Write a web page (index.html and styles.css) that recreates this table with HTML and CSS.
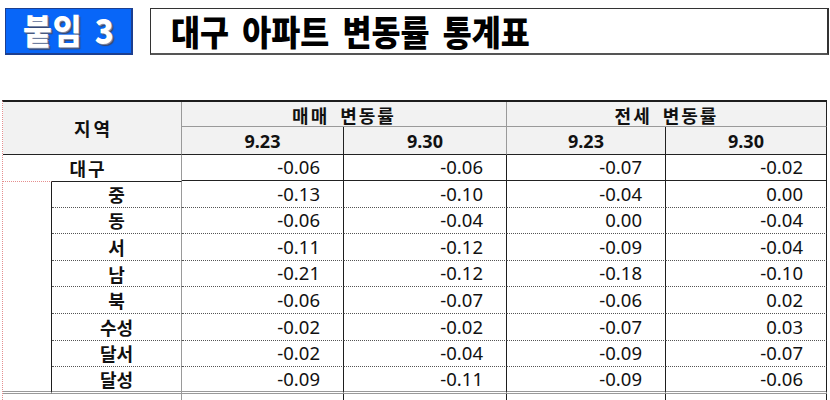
FILE: index.html
```html
<!DOCTYPE html>
<html lang="ko">
<head>
<meta charset="utf-8">
<link rel="stylesheet" href="styles.css">
</head>
<body>
<div class="top">
  <div class="badge"><span class="badge-text">붙임 3</span></div>
  <div class="title-box"><span class="title-text">대구 아파트 변동률 통계표</span></div>
</div>
<table class="stats">
  <colgroup>
    <col class="c-side"><col class="c-name"><col class="c-a"><col class="c-b"><col class="c-c"><col class="c-d">
  </colgroup>
  <thead>
    <tr class="h1">
      <th class="region" colspan="2" rowspan="2">지역</th>
      <th class="grp grp-a" colspan="2">매매 변동률</th>
      <th class="grp grp-b" colspan="2">전세 변동률</th>
    </tr>
    <tr class="h2">
      <th class="sub dark-r">9.23</th>
      <th class="sub gray-r">9.30</th>
      <th class="sub dark-r">9.23</th>
      <th class="sub dark-r">9.30</th>
    </tr>
  </thead>
  <tbody>
    <tr class="r-total">
      <td class="total-name" colspan="2">대구</td>
      <td class="num">-0.06</td><td class="num">-0.06</td><td class="num">-0.07</td><td class="num">-0.02</td>
    </tr>
    <tr class="r-dist first">
      <td class="side" rowspan="8"></td>
      <td class="dname">중</td>
      <td class="num">-0.13</td><td class="num">-0.10</td><td class="num">-0.04</td><td class="num">0.00</td>
    </tr>
    <tr class="r-dist">
      <td class="dname">동</td>
      <td class="num">-0.06</td><td class="num">-0.04</td><td class="num">0.00</td><td class="num">-0.04</td>
    </tr>
    <tr class="r-dist">
      <td class="dname">서</td>
      <td class="num">-0.11</td><td class="num">-0.12</td><td class="num">-0.09</td><td class="num">-0.04</td>
    </tr>
    <tr class="r-dist">
      <td class="dname">남</td>
      <td class="num">-0.21</td><td class="num">-0.12</td><td class="num">-0.18</td><td class="num">-0.10</td>
    </tr>
    <tr class="r-dist">
      <td class="dname">북</td>
      <td class="num">-0.06</td><td class="num">-0.07</td><td class="num">-0.06</td><td class="num">0.02</td>
    </tr>
    <tr class="r-dist">
      <td class="dname">수성</td>
      <td class="num">-0.02</td><td class="num">-0.02</td><td class="num">-0.07</td><td class="num">0.03</td>
    </tr>
    <tr class="r-dist">
      <td class="dname">달서</td>
      <td class="num">-0.02</td><td class="num">-0.04</td><td class="num">-0.09</td><td class="num">-0.07</td>
    </tr>
    <tr class="r-dist last">
      <td class="dname">달성</td>
      <td class="num">-0.09</td><td class="num">-0.11</td><td class="num">-0.09</td><td class="num">-0.06</td>
    </tr>
    <tr class="r-tail">
      <td class="tail-name" colspan="2"></td>
      <td class="tail"></td><td class="tail"></td><td class="tail"></td><td class="tail"></td>
    </tr>
  </tbody>
</table>
</body>
</html>
```

FILE: styles.css
```css
html, body {
  margin: 0;
  padding: 0;
  background: #ffffff;
  overflow: hidden;
}
body {
  width: 830px;
  height: 400px;
  font-family: "Noto Sans CJK KR", sans-serif;
  color: #111;
}
.top {
  display: flex;
  align-items: stretch;
  padding: 8px 1px 0 5px;
  height: 47px;
}
.badge {
  width: 128px;
  box-sizing: border-box;
  background: #0866f8;
  border: 1px solid #1d3f8f;
  border-right-width: 2px;
  border-bottom-width: 2px;
  display: flex;
  align-items: center;
  justify-content: center;
}
.badge-text {
  display: inline-block;
  font-family: "Noto Sans CJK KR", sans-serif;
  font-weight: 900;
  font-size: 34px;
  line-height: 1;
  color: #ffffff;
  letter-spacing: 1px;
  word-spacing: 3px;
  transform: scaleX(0.92);
  text-shadow: 1px 1px 0 #7b88a8, 2px 2px 1px #3a4668;
  margin-top: -2px;
}
.title-box {
  flex: 1;
  margin-left: 17px;
  box-sizing: border-box;
  border: 1px solid #333;
  border-right-width: 2px;
  border-bottom-width: 2px;
  border-bottom-color: #555;
  display: flex;
  align-items: center;
  padding-left: 20px;
}
.title-text {
  display: inline-block;
  font-weight: 900;
  font-size: 35px;
  line-height: 1;
  color: #000;
  transform: scaleX(0.9);
  transform-origin: left center;
  word-spacing: 5px;
  margin-top: -2px;
}

.stats {
  margin: 45px 0 0 2px;
  border-collapse: separate;
  border-spacing: 0;
  table-layout: fixed;
  width: 825px;
  border-top: 2px solid #1e1e1e;
  border-left: 1px dotted #e58f8f;
}
.c-side { width: 49px; }
.c-name { width: 130px; }
.c-a { width: 162px; }
.c-b { width: 163px; }
.c-c { width: 159px; }
.c-d { width: 161px; }

.stats th, .stats td {
  padding: 0;
  box-sizing: border-box;
  line-height: 1;
}
.stats th {
  background: #f2f2f2;
  font-weight: 700;
  color: #111;
  text-align: center;
}
.h1 { height: 25px; }
.h2 { height: 28px; }
.region {
  font-size: 18px;
  border-right: 1px solid #9a9a9a;
  border-bottom: 1px solid #222;
  letter-spacing: 3px;
  padding-left: 3px !important;
}
.grp {
  font-size: 18px;
  border-bottom: 1px solid #9a9a9a;
  letter-spacing: 2px;
  word-spacing: 4px;
  padding-top: 1px !important;
}
.grp-a { border-right: 1px solid #9a9a9a; }
.grp-b { border-right: 1px solid #222; }
.sub {
  font-family: "Noto Sans", "Noto Sans CJK KR", sans-serif;
  font-size: 18px;
  border-bottom: 1px solid #222;
}
.dark-r { border-right: 1px solid #222; }
.gray-r { border-right: 1px solid #9a9a9a; }

.r-total { height: 26px; }
.r-dist { height: 26.6px; }
.r-tail { height: 10px; }

.total-name {
  text-align: center;
  font-weight: 700;
  font-size: 18px;
  letter-spacing: 2px;
  border-right: 1px solid #9a9a9a;
  padding-right: 8px !important;
}
.num {
  font-family: "Noto Sans", "Noto Sans CJK KR", sans-serif;
  font-size: 18.5px;
  text-align: right;
  padding-right: 23px !important;
  border-right: 1px solid #1e1e1e;
  color: #111;
}
.r-total .num { border-bottom: 1px solid #222; }
.r-dist .num { border-bottom: 1px dotted #555; }
.side {
  border-top: 1px dotted #e58f8f;
  border-right: 1px solid #1e1e1e;
  border-bottom: 3px double #9a9a9a;
}
.dname {
  text-align: center;
  font-weight: 700;
  font-size: 18px;
  border-right: 1px solid #9a9a9a;
  border-bottom: 1px dotted #555;
}
.first .dname { border-top: 1px solid #222; }
.last .num, .last .dname { border-bottom: 3px double #9a9a9a; }
.tail-name { border-right: 1px solid #9a9a9a; }
.tail { border-right: 1px solid #1e1e1e; }
```
